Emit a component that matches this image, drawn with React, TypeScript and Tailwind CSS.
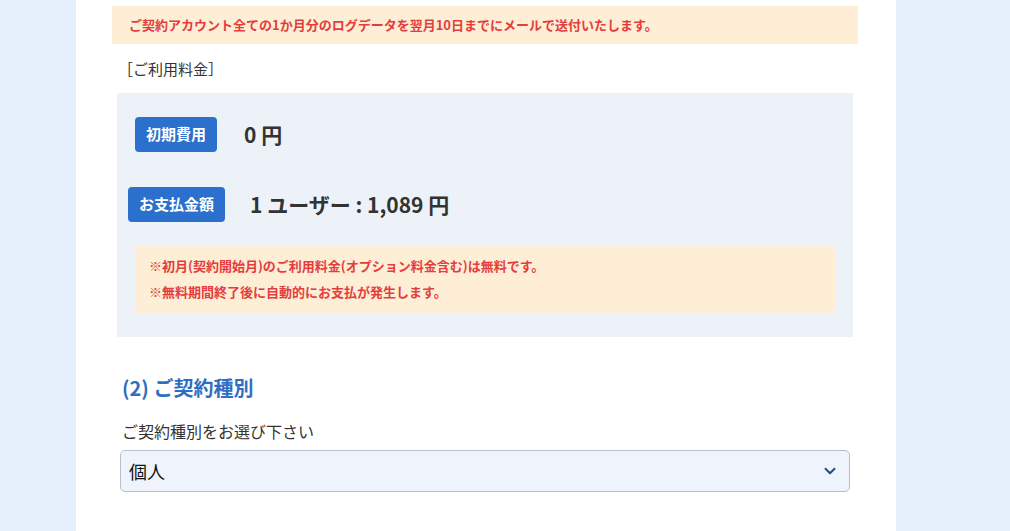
import { ChevronDown } from 'lucide-react';

const FONT = { fontFamily: '"Noto Sans CJK JP", "Noto Sans", sans-serif' };

// 料金バッジ
function PriceBadge({ label }: { label: string }) {
  return (
    <span className="inline-flex h-[35px] items-center rounded-[4px] bg-[#2a70cc] px-[11px] text-[15px] font-bold text-white">
      {label}
    </span>
  );
}

export default function App() {
  return (
    <div className="h-[531px] w-full overflow-hidden bg-[#e6f0fd]" style={FONT}>
      <div className="ml-[76px] h-full w-[820px] bg-white pt-[6px]">
        {/* ログ送付のお知らせ */}
        <div className="ml-[36px] flex h-[38px] w-[746px] items-center bg-[#fdeed5] pl-[17px] text-[13px] font-bold text-[#e43d3d]">
          ご契約アカウント全ての1か月分のログデータを翌月10日までにメールで送付いたします。
        </div>

        <p className="ml-[42px] mt-[14px] text-[15px] leading-[22px] text-[#333]">［ご利用料金］</p>

        {/* ご利用料金 */}
        <div className="ml-[41px] mt-[13px] w-[736px] bg-[#edf2f9] pb-[23px] pt-[24px]">
          <div className="flex items-center pl-[18px]">
            <PriceBadge label="初期費用" />
            <span className="ml-[27px] text-[21px] font-bold text-[#333]">0 円</span>
          </div>
          <div className="mt-[35px] flex items-center pl-[11px]">
            <PriceBadge label="お支払金額" />
            <span className="ml-[25px] text-[21px] font-bold text-[#333]">1 ユーザー : 1,089 円</span>
          </div>
          <div className="ml-[18px] mt-[24px] w-[701px] bg-[#fdeed5] pb-[9px] pl-[14px] pt-[7px] text-[13px] font-bold leading-[26px] text-[#e43d3d]">
            <p>※初月(契約開始月)のご利用料金(オプション料金含む)は無料です。</p>
            <p>※無料期間終了後に自動的にお支払が発生します。</p>
          </div>
        </div>

        {/* ご契約種別 */}
        <h2 className="ml-[46px] mt-[36px] text-[20px] font-bold leading-[30px] text-[#2f6fc1]">(2) ご契約種別</h2>
        <p className="ml-[46px] mt-[17px] text-[16px] leading-[22px] text-[#333]">ご契約種別をお選び下さい</p>
        <div className="ml-[44px] mt-[8px] flex h-[42px] w-[730px] items-center justify-between rounded-[5px] border border-[#b7bfd0] bg-[#eff3fb] pl-[8px] pr-[10px]">
          <span className="text-[18px] text-[#111]">個人</span>
          <ChevronDown className="h-[18px] w-[18px] text-[#1d4f86]" strokeWidth={2.6} />
        </div>
      </div>
    </div>
  );
}
